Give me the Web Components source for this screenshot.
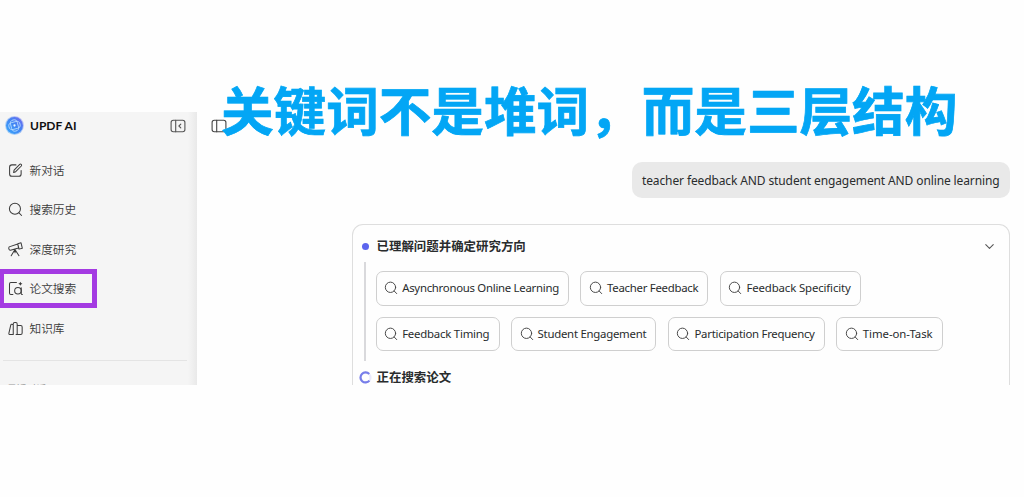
<!DOCTYPE html>
<html lang="zh-CN">
<head>
<meta charset="utf-8">
<title>UPDF AI</title>
<style>
html,body{margin:0;background:#fefefe;}
body{width:1024px;height:497px;overflow:hidden;font-family:"Noto Sans","Noto Sans CJK SC",sans-serif;color:#292c2d;}
</style>
</head>
<body>
<updf-app></updf-app>
<script>
const ICONS={
search:'<circle cx="7.4" cy="7.2" r="5.9"/><path d="M11.7 11.5l2.8 2.9"/>',
edit:'<path d="M8.5 2H4.2Q1.7 2 1.7 4.5v7.2q0 2.5 2.5 2.5h7.3q2.5 0 2.5-2.5V8M6 10.2l.5-2.5 6-6.2q.8-.7 1.6 0t.1 1.7l-6 6.1z"/>',
scope:'<path d="M1.2 5.2l9.2-3 .9 4.2-8.7 2.4q-1.2.2-1.6-1.1t.2-2.5zM10.4 1.9l3.5-1 1.4 5.8-3.5.9zM7.4 8l-4 6.6M7.4 8l4.3 6.6M7.5 8.3v3.2"/>',
paper:'<path d="M9 1.6H3Q1.6 1.6 1.6 3.1v9.8q0 1.5 1.4 1.5h2.2"/><circle cx="10.6" cy="10.4" r="3.5"/><path d="M14.1 7.2v6q0 1.2 1.2 1.2"/><path d="M13.2.7l.7 1.5 1.5.7-1.5.7-.7 1.5-.7-1.5-1.5-.7 1.5-.7z" fill="currentColor" stroke="none"/>',
books:'<path d="M5.6 3.9L4.2 3.4q-.9-.2-1.2.8L.9 13.2q0 1.1 1 1.1h3.7zM5.6 3.2q0-1.5 1.5-1.5h1.2q1.5 0 1.5 1.5v11.1H8.6M9.8 4.8h3.8q1.5 0 1.5 1.5v6.5q0 1.5-1.5 1.5H9.8"/>',
collapse:'<rect x="1.1" y="2.2" width="13.8" height="11.6" rx="2.2"/><path d="M5.7 2.2v11.6M10.8 6.1L8.9 8l1.9 1.9"/>',
panel:'<rect x="1.1" y="2.2" width="13.8" height="11.6" rx="2.2"/><path d="M5.7 2.2v11.6"/>',
down:'<path d="M3.4 5.7L8 10.3l4.6-4.6"/>'
};
function define(name,css,html,after){
  customElements.define(name,class extends HTMLElement{
    connectedCallback(){
      if(this.shadowRoot)return;
      const root=this.attachShadow({mode:'open'});
      root.innerHTML='<style>'+css+'</style>'+(typeof html==='function'?html(this):html);
      if(after)after(this,root);
    }
  });
}
define('ui-icon',':host{display:block;flex:none;width:15px;height:15px}svg{display:block;width:100%;height:100%;overflow:visible}',
  el=>'<svg viewBox="0 0 16 16" fill="none" stroke="currentColor" stroke-width="'+(el.getAttribute('stroke')||1.1)+'" stroke-linecap="round" stroke-linejoin="round">'+ICONS[el.getAttribute('name')]+'</svg>');
/* Text spread evenly over a given width. */
define('spaced-text',':host{display:block;flex:none;white-space:nowrap}span{display:inline-block}','<span><slot></slot></span>',(el,root)=>{
  const s=root.querySelector('span'),w=parseFloat(el.getAttribute('w'));
  el.style.width=w+'px';
  const n=[...el.textContent].length;
  s.style.letterSpacing=((w-s.getBoundingClientRect().width)/n)+'px';
});
define('updf-logo',':host{display:block;flex:none;width:19px;height:19px}svg{display:block}',
`<svg width="19" height="19" viewBox="0 0 20 20"><defs><linearGradient id="g" x1="0" y1="1" x2="1" y2="0"><stop offset="0" stop-color="#3aa8fb"/><stop offset=".55" stop-color="#4284f3"/><stop offset="1" stop-color="#7468ef"/></linearGradient></defs>
<circle cx="10" cy="10" r="9.9" fill="url(#g)" opacity=".4"/><circle cx="10" cy="10" r="8.9" fill="url(#g)"/>
<g fill="none" stroke="#b5dcff" stroke-width=".9"><rect x="6.3" y="4" width="7.4" height="12" rx="3.6" transform="rotate(-14 10 10)"/><rect x="4" y="6.3" width="12" height="7.4" rx="3.6" transform="rotate(-14 10 10)"/></g><circle cx="10" cy="10" r="1.2" fill="#e6f7ff"/></svg>`);
define('nav-item',`:host{display:flex;align-items:center;height:39.4px;padding-left:8.2px;gap:6.3px;font-size:11.7px;line-height:18px;color:#3c3c3c;font-family:"Noto Sans CJK SC",sans-serif;font-weight:350}span{margin-top:-1px}`,
  el=>'<ui-icon name="'+el.getAttribute('icon')+'"></ui-icon><span><slot></slot></span>');
define('side-bar',`:host{display:block;box-sizing:border-box;width:197px;height:273px;overflow:hidden;background:linear-gradient(to right,#f5f5f5 0 188px,#f1f1f1 191px,#e9e9e9 197px)}
header{display:flex;align-items:center;height:27px;padding:0 11px 0 5px}
.name{font:700 12px/18px Lato,"Open Sans",sans-serif;color:#111;margin-left:6px;flex:1}
header ui-icon{color:#555}
nav{position:relative;padding-top:11.9px}
.mark{position:absolute;left:-1px;top:130px;width:98px;height:39px;box-sizing:border-box;border:5px solid #a43ae2;border-left-width:5px}
hr{border:0;height:1px;background:#e4e4e4;margin:12.5px 10px 0 3px}
.recent{font-size:9.8px;line-height:14px;color:#999;margin:21px 0 0 7px;font-family:"Noto Sans CJK SC",sans-serif}`,
`<header><updf-logo></updf-logo><div class="name"><spaced-text w="46.5">UPDF AI</spaced-text></div><ui-icon name="collapse" style="width:16px;height:16px"></ui-icon></header>
<nav><nav-item icon="edit">新对话</nav-item><nav-item icon="search">搜索历史</nav-item><nav-item icon="scope">深度研究</nav-item><nav-item icon="paper">论文搜索</nav-item><nav-item icon="books">知识库</nav-item><div class="mark"></div></nav><hr><div class="recent">最近对话</div>`);
define('topic-chip',`:host{display:flex;align-items:center;box-sizing:border-box;height:34.5px;border:1px solid #cfcfcf;border-radius:7px;padding-left:7.7px;gap:4px;font-size:11.4px;line-height:18px;color:#292c2d}ui-icon{width:14px;height:14px;color:#444}`,
  el=>{const w=parseFloat(el.getAttribute('w'));return '<ui-icon name="search"></ui-icon><spaced-text w="'+(w-36.8)+'">'+el.textContent+'</spaced-text>';},
  el=>{el.style.width=el.getAttribute('w')+'px';});
define('step-title',`:host{display:flex;align-items:center;height:20px;font:700 12.45px/20px "Noto Sans CJK SC",sans-serif;color:#292c2d}.m{width:13px;display:flex;justify-content:center;margin-right:5px}.t{flex:1}i{width:7px;height:7px;border-radius:50%;background:#5c65ee}`,
  el=>'<div class="m">'+(el.hasAttribute('busy')?'<svg width="13" height="13" viewBox="0 0 13 13" fill="none" stroke-width="2.2"><circle cx="6.5" cy="6.5" r="5" stroke="#e9e9fc"/><path d="M10.2 3.1A5 5 0 1 0 10.4 9.6" stroke="#777ee9"/></svg>':'<i></i>')+'</div><div class="t"><slot></slot></div><slot name="end"></slot>');
define('research-card',`:host{display:block;box-sizing:border-box;width:658px;height:161px;border:1px solid #dedede;border-bottom:0;border-radius:11px 11px 0 0;padding:11px 13px 0 5.5px;background:#fefefe;overflow:hidden}
.steps{display:flex;margin-top:6px;height:99px}
.line{width:2px;background:#d9d9dc;margin:0 9.5px 0 5.5px}
.chips{display:flex;flex-direction:column;gap:11px;padding-top:9px}.row{display:flex;gap:11.4px}
step-title[busy]{margin-top:6px}`,
`<step-title>已理解问题并确定研究方向<ui-icon slot="end" name="down" stroke="1.3" style="width:13px;height:13px;color:#555"></ui-icon></step-title>
<div class="steps"><div class="line"></div><div class="chips"><div class="row"><topic-chip w="193.5">Asynchronous Online Learning</topic-chip><topic-chip w="128">Teacher Feedback</topic-chip><topic-chip w="141">Feedback Specificity</topic-chip></div><div class="row"><topic-chip w="124">Feedback Timing</topic-chip><topic-chip w="145.5">Student Engagement</topic-chip><topic-chip w="157">Participation Frequency</topic-chip><topic-chip w="106.5">Time-on-Task</topic-chip></div></div></div>
<step-title busy>正在搜索论文</step-title>`);
define('user-message',`:host{display:flex;align-items:center;box-sizing:border-box;width:378px;height:36px;border-radius:10px;background:#e9e9e9;padding:1px 10px 0;font-size:12px;line-height:20px;color:#292c2d}`,
`<spaced-text w="357.5">teacher feedback AND student engagement AND online learning</spaced-text>`);
define('chat-pane',`:host{display:flex;flex-direction:column;align-items:flex-end;flex:1;height:273px;overflow:hidden;box-sizing:border-box;padding-right:14px}
.top{align-self:stretch;height:28px;display:flex;align-items:center;padding-left:14px;color:#444;margin-bottom:22.5px}user-message{margin-bottom:26px}research-card{flex:none}`,
`<div class="top"><ui-icon name="panel" style="width:16px;height:16px"></ui-icon></div><user-message></user-message><research-card></research-card>`);
define('updf-app',`:host{display:block;position:relative;width:1024px;height:497px;background:#fefefe}
main{display:flex;padding-top:112px}
h1{position:absolute;left:221px;top:68px;margin:0;font:700 52.6px/80px "Noto Sans CJK SC",sans-serif;color:#03a6f5;white-space:nowrap;-webkit-text-stroke:.7px #03a6f5;text-shadow:0 0 1px #bdf1ff}`,
`<main><side-bar></side-bar><chat-pane></chat-pane></main><h1>关键词不是堆词，而是三层结构</h1>`);
</script>
</body>
</html>
